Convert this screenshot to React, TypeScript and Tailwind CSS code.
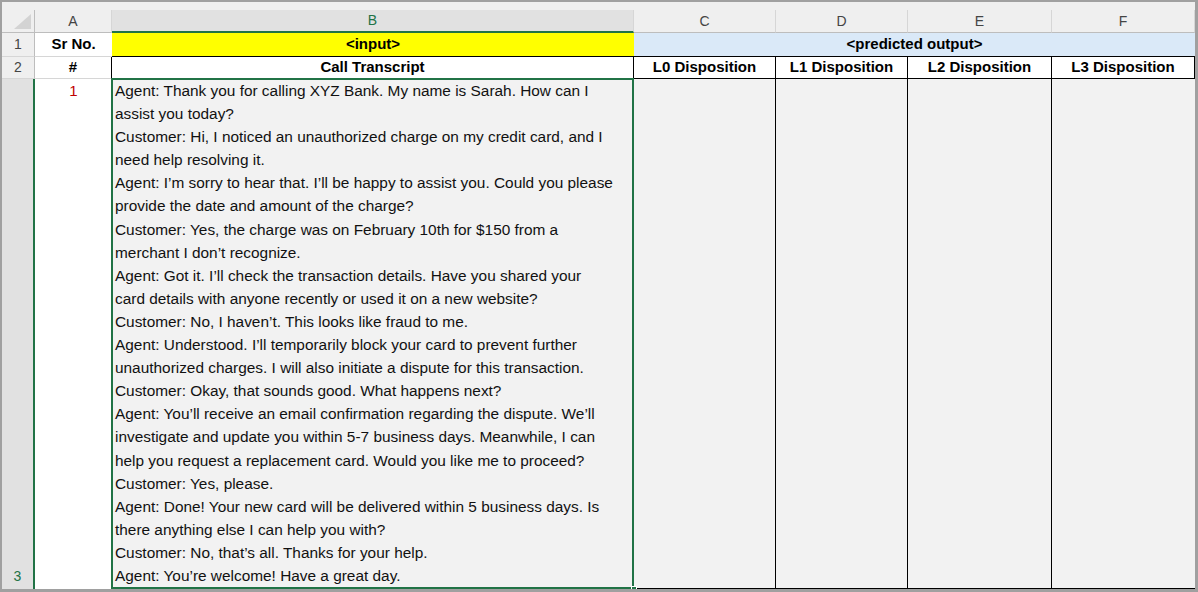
const lines = [
  'Agent: Thank you for calling XYZ Bank. My name is Sarah. How can I',
  'assist you today?',
  'Customer: Hi, I noticed an unauthorized charge on my credit card, and I',
  'need help resolving it.',
  'Agent: I’m sorry to hear that. I’ll be happy to assist you. Could you please',
  'provide the date and amount of the charge?',
  'Customer: Yes, the charge was on February 10th for $150 from a',
  'merchant I don’t recognize.',
  'Agent: Got it. I’ll check the transaction details. Have you shared your',
  'card details with anyone recently or used it on a new website?',
  'Customer: No, I haven’t. This looks like fraud to me.',
  'Agent: Understood. I’ll temporarily block your card to prevent further',
  'unauthorized charges. I will also initiate a dispute for this transaction.',
  'Customer: Okay, that sounds good. What happens next?',
  'Agent: You’ll receive an email confirmation regarding the dispute. We’ll',
  'investigate and update you within 5-7 business days. Meanwhile, I can',
  'help you request a replacement card. Would you like me to proceed?',
  'Customer: Yes, please.',
  'Agent: Done! Your new card will be delivered within 5 business days. Is',
  'there anything else I can help you with?',
  'Customer: No, that’s all. Thanks for your help.',
  'Agent: You’re welcome! Have a great day.',
]

const dispositions = ['L0 Disposition', 'L1 Disposition', 'L2 Disposition', 'L3 Disposition']
const outCols = ['C', 'D', 'E', 'F']

export default function App() {
  return (
    <div
      className="h-[592px] w-[1198px] overflow-hidden border-b-[3px] border-l-2 border-r-[3px] border-t-2 border-[#a0a0a0] bg-[#efefef] text-black"
      style={{ fontFamily: "'Liberation Sans', Arial, sans-serif" }}
    >
      <div className="grid h-full grid-cols-[33px_77px_522px_142px_132px_144px_143px] grid-rows-[8px_23px_24px_22px_510px]">
        {/* top strip */}
        <div className="col-span-7 bg-[#efefef]" />

        {/* column headers */}
        <div className="relative border-b border-r border-[#bdbdbd] bg-[#efefef]">
          <svg className="absolute bottom-[3px] right-[3px]" width="17" height="15" viewBox="0 0 17 15">
            <polygon points="17,0 17,15 0,15" fill="#d3d3d3" />
          </svg>
        </div>
        <div className="flex items-center justify-center border-b border-r border-b-[#bdbdbd] border-r-[#d6d6d6] bg-[#efefef] text-[14px] text-[#444]">
          A
        </div>
        <div className="flex items-center justify-center border-b-2 border-r border-b-[#217346] border-r-[#d6d6d6] bg-[#e1e1e1] text-[14px] text-[#217346]">
          B
        </div>
        {outCols.map((c) => (
          <div
            key={c}
            className="flex items-center justify-center border-b border-r border-b-[#bdbdbd] border-r-[#d6d6d6] bg-[#efefef] text-[14px] text-[#444]"
          >
            {c}
          </div>
        ))}

        {/* row 1 */}
        <div className="flex items-center justify-center border-b border-r border-b-[#d6d6d6] border-r-[#bdbdbd] bg-[#efefef] text-[14px] text-[#444]">
          1
        </div>
        <div className="flex items-center justify-center border-b border-[#d6d6d6] bg-white text-[15px] font-bold">
          Sr No.
        </div>
        <div className="flex items-center justify-center border-b border-black bg-[#ffff00] text-[15px] font-bold">
          &lt;input&gt;
        </div>
        <div className="col-span-4 flex items-center justify-center border-b border-black bg-[#dae9f8] text-[15px] font-bold">
          &lt;predicted output&gt;
        </div>

        {/* row 2 */}
        <div className="flex items-center justify-center border-b border-r border-b-[#d6d6d6] border-r-[#bdbdbd] bg-[#efefef] text-[14px] text-[#444]">
          2
        </div>
        <div className="flex items-center justify-center border-b border-r border-b-[#d6d6d6] border-r-black bg-white text-[15px] font-bold">
          #
        </div>
        <div className="flex items-center justify-center border-b border-r border-black bg-white text-[15px] font-bold">
          Call Transcript
        </div>
        {dispositions.map((d) => (
          <div
            key={d}
            className="flex items-center justify-center border-b border-r border-black bg-white text-[15px] font-bold"
          >
            {d}
          </div>
        ))}

        {/* row 3 */}
        <div className="flex items-end justify-center border-r-2 border-[#217346] bg-[#e1e1e1] pb-0.5 text-[14px] text-[#217346]">
          3
        </div>
        <div className="flex justify-center bg-white pt-[1px] text-[15px] text-[#c00000]">1</div>
        <div className="relative bg-[#f2f2f2] pl-[3px] text-[15.4px] leading-[23.1px] text-[#111]">
          {lines.map((l, i) => (
            <div key={i} className="whitespace-nowrap">
              {l}
            </div>
          ))}
          <div className="absolute -left-px -top-px bottom-0 right-0 border-2 border-[#217346]" />
          <div className="absolute -bottom-[3px] -right-[3px] h-[6px] w-[6px] border border-white bg-[#217346]" />
        </div>
        {outCols.map((c, i) => (
          <div
            key={c}
            className={`border-b border-black bg-[#f2f2f2] ${i < 3 ? 'border-r' : ''}`}
          />
        ))}
      </div>
    </div>
  )
}
